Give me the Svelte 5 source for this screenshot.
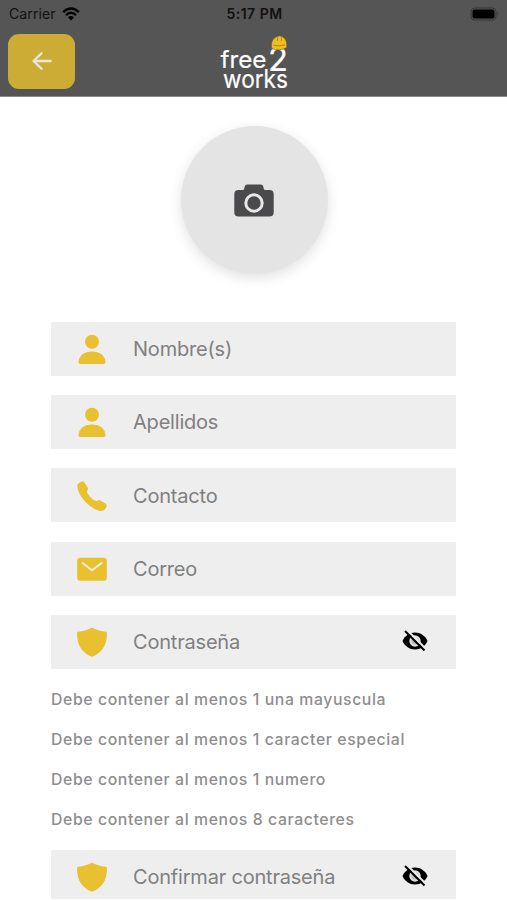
<script lang="ts">
	type Icon = 'person' | 'call' | 'mail' | 'shield';

	interface Field {
		name: string;
		label: string;
		icon: Icon;
		secret?: boolean;
	}

	const fields: Field[] = [
		{ name: 'nombre', label: 'Nombre(s)', icon: 'person' },
		{ name: 'apellidos', label: 'Apellidos', icon: 'person' },
		{ name: 'contacto', label: 'Contacto', icon: 'call' },
		{ name: 'correo', label: 'Correo', icon: 'mail' },
		{ name: 'password', label: 'Contraseña', icon: 'shield', secret: true }
	];

	const confirmField: Field = {
		name: 'confirm',
		label: 'Confirmar contraseña',
		icon: 'shield',
		secret: true
	};

	const rules = [
		'Debe contener al menos 1 una mayuscula',
		'Debe contener al menos 1 caracter especial',
		'Debe contener al menos 1 numero',
		'Debe contener al menos 8 caracteres'
	];

	let values = $state<Record<string, string>>({});
	let visible = $state<Record<string, boolean>>({});

	function toggleVisible(name: string) {
		visible[name] = !visible[name];
	}
</script>

{#snippet fieldIcon(icon: Icon)}
	<svg class="field-icon" viewBox="0 0 30 30" aria-hidden="true">
		{#if icon === 'person'}
			<circle cx="15" cy="7.8" r="7" />
			<path d="M3.2 30Q1.4 30 1.5 28.2C2 21.4 7.6 17.6 15 17.6s13 3.8 13.5 10.6Q28.6 30 26.8 30Z" />
		{:else if icon === 'call'}
			<path
				d="M24 30C14.5 29.5 0.3 15 0.3 4.6C0.5 2.7 3.2 0.8 5.2 0.4Q6.4 0.2 7.2 1.3L10.6 6.6Q11.4 7.9 10.5 9.2C9.7 10.5 9.900 11.6 10.9 13C12.7 15.7 14.5 17.7 17.2 19.3C18.5 20.1 19.5 20.2 20.8 19.4Q22.2 18.6 23.5 19.4L28.7 22.8Q30 23.8 29.6 25.2C28.9 27.6 26.5 30.1 24 30Z"
			/>
		{:else if icon === 'mail'}
			<rect x="0.2" y="3.8" width="29.6" height="23" rx="3.2" />
			<path class="flap" d="M5.6 9L15 16.3L24.6 9" />
		{:else}
			<path
				d="M15 0.5C11.7 2.8 6 4.4 1.2 4.7Q0.1 4.8 0.1 6C-0.3 18 5 25.7 15 29.8C25 25.7 30.3 18 29.9 6Q29.9 4.8 28.8 4.7C24 4.4 18.3 2.8 15 0.5Z"
			/>
		{/if}
	</svg>
{/snippet}

{#snippet formField(field: Field)}
	<div class="field">
		{@render fieldIcon(field.icon)}
		<input
			type={field.secret && !visible[field.name] ? 'password' : 'text'}
			name={field.name}
			placeholder={field.label}
			aria-label={field.label}
			bind:value={values[field.name]}
		/>
		{#if field.secret}
			<button
				type="button"
				class="eye"
				aria-label="Mostrar contraseña"
				onclick={() => toggleVisible(field.name)}
			>
				<svg viewBox="0 0 26 22" aria-hidden="true">
					<path
						d="M0.5 11C3 5.500 7.500 2.500 13 2.500S23 5.500 25.500 11C23 16.500 18.500 19.500 13 19.500S3 16.500 0.500 11Z"
					/>
					<circle class="iris" cx="13" cy="11" r="5.7" />
					<circle class="pupil" cx="13" cy="11" r="3.4" />
					<path class="slash-gap" d="M4.5 -0.5L24.5 19.5" />
					<path class="slash" d="M3 1L22.5 20.5" />
				</svg>
			</button>
		{/if}
	</div>
{/snippet}

<div class="screen">
	<header>
		<div class="status-bar">
			<span class="carrier">
				Carrier
				<svg class="wifi" viewBox="0 0 18 14" aria-hidden="true">
					<path d="M1.2 5.1Q9 -2 16.8 5.1M4 8.1Q9 3.6 14 8.1" />
					<path class="dot" d="M5.9 10.2Q9 7.6 12.1 10.2L9 13.5Z" />
				</svg>
			</span>
			<span class="time">5:17 PM</span>
			<svg class="battery" viewBox="0 0 30 14" aria-hidden="true">
				<rect class="shell" x="1" y="1" width="25" height="12" rx="3.5" />
				<rect x="2.5" y="2.5" width="22" height="9" rx="2" />
				<path class="tip" d="M27.5 5q2 2 0 4z" />
			</svg>
		</div>
		<div class="nav">
			<button type="button" class="back" aria-label="Regresar">
				<svg viewBox="0 0 20 18" aria-hidden="true">
					<path d="M9.5 1.3L1.5 9L9.5 16.7M2 9H18.7" />
				</svg>
			</button>
			<svg class="logo" viewBox="0 0 70 60" role="img" aria-label="free2works">
				<text x="1.5" y="33" font-size="24" textLength="46" lengthAdjust="spacingAndGlyphs">free</text>
				<text x="49" y="35.5" font-size="33" textLength="20" lengthAdjust="spacingAndGlyphs">2</text>
				<text x="4" y="52.5" font-size="25" textLength="65" lengthAdjust="spacingAndGlyphs">works</text>
				<path
					class="helmet"
					d="M52.600 12C52 5.500 55 2.500 58.500 1.600Q60.500 0 62.500 1.600C66.500 2.800 68 6.500 67.700 11L68 12.600Q61 16.300 52.600 13.600Z"
				/>
				<path class="helmet-line" d="M54.500 10.2Q60 11.600 66 9.900M58.500 2.500V6M62.500 2.500V6" />
			</svg>
		</div>
	</header>

	<main>
		<button type="button" class="photo" aria-label="Agregar foto">
			<svg viewBox="0 0 40 33" aria-hidden="true">
				<path
					d="M4.5 6H8.5Q10 6 10.3 4.5L10.7 2.5Q11.2 0.5 13.2 0.5H26.8Q28.8 0.5 29.3 2.5L29.7 4.5Q30 6 31.5 6H35.5Q39.7 6 39.7 10V28.5Q39.7 32.5 35.5 32.5H4.5Q0.3 32.5 0.3 28.5V10Q0.3 6 4.5 6Z"
				/>
				<circle cx="20" cy="19" r="8.2" />
			</svg>
		</button>

		<form>
			{#each fields as field (field.name)}
				{@render formField(field)}
			{/each}
			<ul>
				{#each rules as rule}
					<li>{rule}</li>
				{/each}
			</ul>
			<div class="clipped">
				{@render formField(confirmField)}
			</div>
		</form>
	</main>
</div>

<style>
	:global(body) {
		background: #fff;
	}

	.screen {
		height: 900px;
		overflow: hidden;
		font-family: Inter, 'Liberation Sans', sans-serif;
		background: #fff;
	}

	button {
		border: none;
		padding: 0;
		cursor: pointer;
	}

	svg {
		display: block;
	}

	header {
		box-sizing: border-box;
		height: 97px;
		background: #555;
		border-bottom: 1px solid #888;
	}

	.status-bar {
		display: grid;
		grid-template-columns: 1fr auto 1fr;
		align-items: center;
		height: 27px;
		padding: 0 7px 0 9px;
		font-size: 14px;
		color: #111;
	}

	.carrier {
		display: flex;
		align-items: center;
		gap: 6px;
		letter-spacing: 0.1px;
	}

	.wifi {
		width: 18px;
		height: 14px;
		fill: none;
		stroke: #000;
		stroke-width: 2.4;
	}

	.wifi .dot {
		fill: #000;
		stroke: none;
	}

	.time {
		font-weight: 600;
		letter-spacing: 0.5px;
	}

	.battery {
		justify-self: end;
		width: 30px;
		height: 14px;
	}

	.battery .shell {
		fill: none;
		stroke: #363636;
	}

	.battery .tip {
		fill: #363636;
	}

	.nav {
		display: grid;
		grid-template-columns: 1fr auto 1fr;
		align-items: start;
		padding: 7px 8px 0;
	}

	.back {
		display: flex;
		align-items: center;
		justify-content: center;
		width: 67px;
		height: 55px;
		border-radius: 11px;
		background: #ccac35;
	}

	.back svg {
		width: 20px;
		height: 18px;
		margin-bottom: 1px;
		fill: none;
		stroke: #e8e5dc;
		stroke-width: 2.3;
		stroke-linecap: round;
		stroke-linejoin: round;
	}

	.logo {
		width: 70px;
		height: 60px;
		margin-top: 1px;
		overflow: visible;
		fill: #fff;
	}

	.logo text {
		stroke: #fff;
		stroke-width: 0.2;
	}

	.helmet {
		fill: #edbd22;
		stroke: #665423;
		stroke-width: 0.6;
	}

	.helmet-line {
		fill: none;
		stroke: #a57c16;
		stroke-width: 0.8;
	}

	main {
		display: flex;
		flex-direction: column;
		align-items: center;
		padding-top: 29px;
	}

	.photo {
		display: flex;
		align-items: center;
		justify-content: center;
		width: 147px;
		height: 148px;
		margin-left: 1px;
		border-radius: 50%;
		background: #e4e4e4;
		box-shadow: 0 4px 13px rgba(0, 0, 0, 0.12);
	}

	.photo svg {
		width: 40px;
		height: 33px;
		fill: #4a494b;
	}

	.photo circle {
		fill: none;
		stroke: #e8e8e8;
		stroke-width: 3;
	}

	form {
		width: 405px;
		margin-top: 47.7px;
	}

	.field {
		display: flex;
		align-items: center;
		box-sizing: border-box;
		height: 54px;
		margin-bottom: 19.3px;
		padding: 1px 28px 0 26px;
		background: #eee;
	}

	.field-icon {
		flex: none;
		width: 30px;
		height: 30px;
		margin-right: 26px;
		fill: #e9c02f;
	}

	.flap {
		fill: none;
		stroke: #f6efd8;
		stroke-width: 2;
		stroke-linecap: round;
		stroke-linejoin: round;
	}

	input {
		flex: 1;
		min-width: 0;
		padding: 0;
		border: none;
		outline: none;
		background: transparent;
		font: 20px Inter, sans-serif;
		letter-spacing: -0.2px;
		color: #333;
	}

	input::placeholder {
		color: #808080;
		opacity: 1;
	}

	.eye {
		width: 26px;
		height: 22px;
		margin-bottom: 3px;
		background: none;
	}

	.eye svg {
		width: 26px;
		height: 22px;
	}

	.iris {
		fill: #ddd;
	}

	.pupil {
		fill: #bbb;
	}

	.slash,
	.slash-gap {
		stroke: #000;
		stroke-width: 2;
	}

	.slash-gap {
		stroke: #eee;
	}

	ul {
		margin: 0;
		padding: 0.5px 0;
		list-style: none;
	}

	li {
		height: 40.2px;
		font-size: 15.8px;
		font-weight: 500;
		line-height: 22px;
		letter-spacing: 0.6px;
		white-space: nowrap;
		color: #8e8e8e;
	}

	.clipped {
		height: 49px;
		overflow: hidden;
	}
</style>
